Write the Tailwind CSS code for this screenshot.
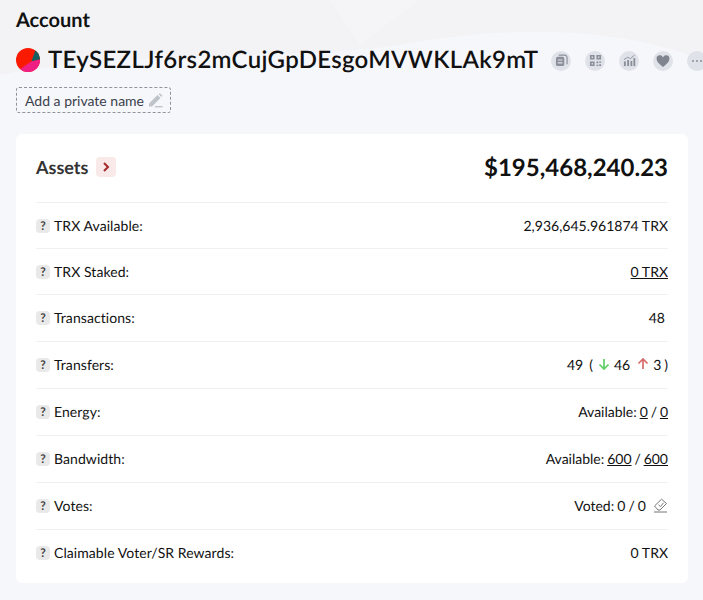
<!DOCTYPE html>
<html lang="en">

<head>
  <meta charset="UTF-8" />
  <meta name="viewport" content="width=device-width, initial-scale=1" />
  <title>Account</title>
  <script src="https://cdn.jsdelivr.net/npm/@tailwindcss/browser@4"></script>
</head>

<body class="bg-[#f6f7fb] font-['Lato',sans-serif] [text-rendering:geometricPrecision] text-[#111] h-[600px] overflow-hidden pl-4 pr-[15px] relative">
  <!-- faint backdrop shape -->
  <svg class="absolute top-0 left-0 w-[703px] h-[130px]" viewBox="0 0 703 130">
    <path d="M0 0 H703 V60 C600 20 480 30 400 45 C300 60 120 50 0 75 Z" fill="#f3f3f6" />
    <path d="M330 0 L420 0 L360 45 Z" fill="#f5f5f8" />
  </svg>

  <div class="relative">
    <h1 class="pt-[8px] text-[20px] leading-[24px] font-bold text-[#111]">Account</h1>

    <div class="mt-[8px] flex items-center whitespace-nowrap h-[40px]">
      <svg class="w-6 h-6 shrink-0" viewBox="0 0 24 24">
        <clipPath id="avatar"><circle cx="12" cy="12" r="12" /></clipPath>
        <g clip-path="url(#avatar)">
          <rect width="24" height="24" fill="#fa1a00" />
          <path d="M15.5 13.3 L2 22.5 V24 H24 V11.2 Z" fill="#f01f84" />
          <path d="M15.5 13.3 L19.5 2 L24 4 V11.2 Z" fill="#156162" />
        </g>
      </svg>
      <span class="ml-2 text-[24px] leading-[40px] font-semibold tracking-[0.32px]">TEySEZLJf6rs2mCujGpDEsgoMVWKLAk9mT</span>
      <div class="ml-[13px] flex gap-[14px] shrink-0 mt-[1px]">
        <span class="w-5 h-5 rounded-full bg-[#dfe2e8] flex items-center justify-center shrink-0">
          <svg class="w-[13px] h-[13px]" viewBox="0 0 14 14" fill="none" stroke="#8a8f9a" stroke-width="1.2"><rect x="1" y="3" width="9" height="10" rx="2" fill="#8a8f9a" stroke="none" /><path d="M3 6.5h5M3 9.5h5" stroke="#dfe2e8" /><path d="M4 1.2h6.5a2.5 2.5 0 0 1 2.5 2.5V11" /></svg>
        </span>
        <span class="w-5 h-5 rounded-full bg-[#dfe2e8] flex items-center justify-center shrink-0">
          <svg class="w-[13px] h-[13px]" viewBox="0 0 14 14" fill="#8a8f9a"><path fill-rule="evenodd" d="M1 1h5v5H1Z M2.8 2.8v1.4h1.4V2.8Z M8 1h5v5H8Z M9.8 2.8v1.4h1.4V2.8Z M1 8h5v5H1Z M2.8 9.8v1.4h1.4V9.8Z" /><rect x="8" y="8" width="2" height="2" /><rect x="11" y="11" width="2" height="2" /><rect x="11" y="8" width="2" height="1.5" /><rect x="8" y="11.5" width="2" height="1.5" /></svg>
        </span>
        <span class="w-5 h-5 rounded-full bg-[#dfe2e8] flex items-center justify-center shrink-0">
          <svg class="w-[13px] h-[13px]" viewBox="0 0 14 14" fill="#8a8f9a"><rect x="1" y="8" width="2" height="5" /><rect x="4.5" y="6.5" width="2" height="6.5" /><rect x="8" y="7.5" width="2" height="5.5" /><rect x="11.2" y="4.5" width="2" height="8.5" /><path d="M1 6 L5 3.5 L8 5 L12.5 1.2" fill="none" stroke="#8a8f9a" stroke-width="1" /></svg>
        </span>
        <span class="w-5 h-5 rounded-full bg-[#dfe2e8] flex items-center justify-center shrink-0">
          <svg class="w-[14px] h-[14px]" viewBox="0 0 14 14" fill="#7f848f"><path d="M7 13 C3 10 .6 7.8 .6 4.8 A3.3 3.3 0 0 1 7 3.4 A3.3 3.3 0 0 1 13.4 4.8 C13.4 7.8 11 10 7 13 Z" /></svg>
        </span>
        <span class="w-5 h-5 rounded-full bg-[#dfe2e8] flex items-center justify-center gap-[2px] shrink-0">
          <i class="w-[2px] h-[2px] rounded-full bg-[#8a8f9a]"></i>
          <i class="w-[2px] h-[2px] rounded-full bg-[#8a8f9a]"></i>
          <i class="w-[2px] h-[2px] rounded-full bg-[#8a8f9a]"></i>
        </span>
      </div>
    </div>

    <button class="mt-[7px] h-[26px] w-[155px] flex items-center pl-2 rounded-[3px] border border-dashed border-[#8f939b] text-[14px] text-[#3a3f4b]">
      Add a private name
      <svg class="ml-[4px] w-[15px] h-[15px]" viewBox="0 0 15 15" fill="#bfc3ca"><path d="M1 10.5 L9.5 2 L12.5 5 L4 13.5 L1 13.5 Z" /><path d="M10.5 1 L12 .3 L14.5 2.8 L13.5 4 Z" /><rect x="7" y="13" width="7.5" height="1.4" /></svg>
    </button>

    <section class="mt-[21px] bg-white rounded-[6px] px-5 h-[449px]">
      <div class="flex items-center justify-between h-[68px]">
        <div class="flex items-center pb-[2px]">
          <span class="text-[18px] font-bold text-[#333]">Assets</span>
          <span class="ml-2 w-5 h-5 rounded-[4px] bg-[#f9e9e9] flex items-center justify-center">
            <svg class="w-[10px] h-[10px]" viewBox="0 0 10 10" fill="none" stroke="#a32a2a" stroke-width="2"><path d="M3 1 L7 5 L3 9" /></svg>
          </span>
        </div>
        <span class="text-[24px] font-bold">$195,468,240.23</span>
      </div>

      <div class="flex items-center justify-between h-[46px] border-t border-[#f0f0f2] text-[14px]">
        <div class="flex items-center tracking-[0.07px]"><span class="w-[14px] h-[14px] mr-1 rounded-[4px] bg-[#e9e9e9] text-[#444] text-[12px] font-bold flex items-center justify-center">?</span>TRX Available:</div>
        <span>2,936,645.961874 TRX</span>
      </div>
      <div class="flex items-center justify-between h-[46px] border-t border-[#f0f0f2] text-[14px]">
        <div class="flex items-center tracking-[0.07px]"><span class="w-[14px] h-[14px] mr-1 rounded-[4px] bg-[#e9e9e9] text-[#444] text-[12px] font-bold flex items-center justify-center">?</span>TRX Staked:</div>
        <span class="underline">0 TRX</span>
      </div>
      <div class="flex items-center justify-between h-[47px] pb-[2px] border-t border-[#f0f0f2] text-[14px]">
        <div class="flex items-center tracking-[0.07px]"><span class="w-[14px] h-[14px] mt-[2px] mr-1 rounded-[4px] bg-[#e9e9e9] text-[#444] text-[12px] font-bold flex items-center justify-center">?</span>Transactions:</div>
        <span class="pr-[3px]">48</span>
      </div>
      <div class="flex items-center justify-between h-[47px] pb-[2px] border-t border-[#f0f0f2] text-[14px]">
        <div class="flex items-center tracking-[0.07px]"><span class="w-[14px] h-[14px] mt-[2px] mr-1 rounded-[4px] bg-[#e9e9e9] text-[#444] text-[12px] font-bold flex items-center justify-center">?</span>Transfers:</div>
        <div class="flex items-center">
          <span>49</span>
          <span class="ml-[6px]">(</span>
          <svg class="ml-[5px] w-[12px] h-[12px]" viewBox="0 0 12 12" fill="none" stroke="#5fcf65" stroke-width="1.7"><path d="M6 1 V11 M1.5 6.5 L6 11 L10.5 6.5" /></svg>
          <span class="ml-[4px]">46</span>
          <svg class="ml-[7px] w-[12px] h-[12px]" viewBox="0 0 12 12" fill="none" stroke="#d66a6a" stroke-width="1.7"><path d="M6 11 V1 M1.5 5.5 L6 1 L10.5 5.5" /></svg>
          <span class="ml-[4px]">3</span>
          <span class="ml-[3px]">)</span>
        </div>
      </div>
      <div class="flex items-center justify-between h-[47px] pb-[2px] border-t border-[#f0f0f2] text-[14px]">
        <div class="flex items-center tracking-[0.07px]"><span class="w-[14px] h-[14px] mt-[2px] mr-1 rounded-[4px] bg-[#e9e9e9] text-[#444] text-[12px] font-bold flex items-center justify-center">?</span>Energy:</div>
        <span class="[word-spacing:-0.7px]">Available: <span class="underline">0</span> / <span class="underline">0</span></span>
      </div>
      <div class="flex items-center justify-between h-[47px] pb-[2px] border-t border-[#f0f0f2] text-[14px]">
        <div class="flex items-center tracking-[0.07px]"><span class="w-[14px] h-[14px] mt-[2px] mr-1 rounded-[4px] bg-[#e9e9e9] text-[#444] text-[12px] font-bold flex items-center justify-center">?</span>Bandwidth:</div>
        <span class="[word-spacing:-0.7px]">Available: <span class="underline">600</span> / <span class="underline">600</span></span>
      </div>
      <div class="flex items-center justify-between h-[47px] pb-[2px] border-t border-[#f0f0f2] text-[14px]">
        <div class="flex items-center tracking-[0.07px]"><span class="w-[14px] h-[14px] mt-[2px] mr-1 rounded-[4px] bg-[#e9e9e9] text-[#444] text-[12px] font-bold flex items-center justify-center">?</span>Votes:</div>
        <div class="flex items-center">
          <span class="[word-spacing:-0.5px]">Voted: 0 / 0</span>
          <svg class="ml-[7px] w-[15px] h-[15px]" viewBox="0 0 15 15" fill="none" stroke="#777" stroke-width="1"><path d="M1.5 8 L8.5 1.2 L13.5 5.5 L7 12 L5 12 Z" /><path d="M5.5 6.8 L7.5 8.6 L10.5 4.8" /><path d="M1 14 H14" /></svg>
        </div>
      </div>
      <div class="flex items-center justify-between h-[47px] pb-[2px] border-t border-[#f0f0f2] text-[14px]">
        <div class="flex items-center tracking-[0.07px]"><span class="w-[14px] h-[14px] mt-[2px] mr-1 rounded-[4px] bg-[#e9e9e9] text-[#444] text-[12px] font-bold flex items-center justify-center">?</span>Claimable Voter/SR Rewards:</div>
        <span>0 TRX</span>
      </div>
    </section>
  </div>
</body>

</html>
